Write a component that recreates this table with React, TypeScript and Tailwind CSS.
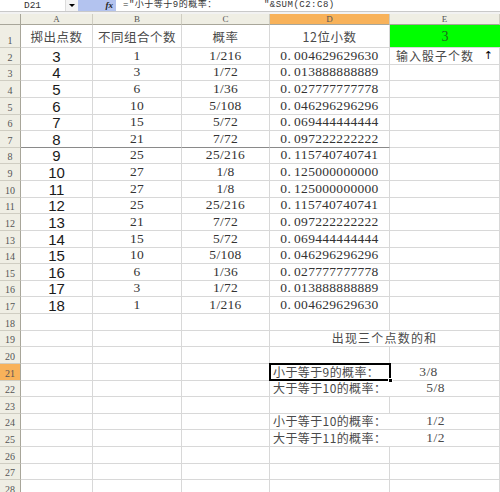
import React from "react";

const cjk = "font-['Noto_Sans_CJK_SC',sans-serif]";
const mono = "font-['Liberation_Mono','Noto_Sans_CJK_SC',monospace]";
const serif = "font-['Liberation_Serif','Noto_Sans_CJK_SC',serif]";
const cols = "grid grid-cols-[21px_72px_89px_88px_120px_110px]";
const grid = "border-r border-b border-[#d8d8d8]";

const counts = [1, 3, 6, 10, 15, 21, 25, 27, 27, 25, 21, 15, 10, 6, 3, 1];
const fracs = [
  "1/216", "1/72", "1/36", "5/108", "5/72", "7/72", "25/216", "1/8",
  "1/8", "25/216", "7/72", "5/72", "5/108", "1/36", "1/72", "1/216",
];
const decimals = [
  "004629629630", "013888888889", "027777777778", "046296296296",
  "069444444444", "097222222222", "115740740741", "125000000000",
  "125000000000", "115740740741", "097222222222", "069444444444",
  "046296296296", "027777777778", "013888888889", "004629629630",
];

// text in column D that runs over into E
const notes: Record<number, [string, string]> = {
  21: ["小于等于9的概率：", "3/8"],
  22: ["大于等于10的概率：", "5/8"],
  24: ["小于等于10的概率：", "1/2"],
  25: ["大于等于11的概率：", "1/2"],
};

function RowHead({ n, active }: { n: number; active?: boolean }) {
  return (
    <div
      className={`flex items-end justify-center border-r border-b border-r-[#a8a69a] border-b-[#cfcdc2] pb-[1px] font-['Liberation_Serif',serif] text-[10px] leading-[10px] text-[#555] ${
        active ? "bg-[#f8b25a]" : "bg-[#efeee4]"
      }`}
    >
      {n}
    </div>
  );
}

function FormulaBar() {
  return (
    <div className="flex h-[12px] border-b border-[#c9c9c9] bg-white">
      <div className={`flex w-[65px] items-center justify-center text-[9.5px] leading-none text-[#333] ${mono}`}>
        D21
      </div>
      <div className="flex w-[13px] items-center justify-center border-l border-[#dcdcdc] bg-[#f4f4f4]">
        <div className="h-0 w-0 border-x-[3px] border-t-[3px] border-x-transparent border-t-black" />
      </div>
      <div className="flex w-[38px] items-center justify-end bg-[#b3c3ef] pr-[3px]">
        <span className="font-['Liberation_Serif',serif] text-[9px] font-bold italic leading-none text-[#222]">
          fx
        </span>
      </div>
      <div className={`flex flex-1 items-center whitespace-pre pl-[7px] text-[9px] leading-none tracking-[0.5px] text-[#333] ${mono}`}>
        {'="小于等于9的概率：        "&SUM(C2:C8)'}
      </div>
    </div>
  );
}

function ColumnHeads() {
  const letters = ["A", "B", "C", "D", "E"];
  return (
    <div className={`${cols} h-[11px]`}>
      <div className="border-r border-b border-[#a8a69a] bg-[#efeee4]" />
      {letters.map((l) => (
        <div
          key={l}
          className={`flex items-center justify-center border-r border-b border-r-[#cfcdc2] border-b-[#a8a69a] font-['Liberation_Serif',serif] text-[9px] leading-none text-[#555] ${
            l === "D" ? "bg-[#f8b25a]" : "bg-[#efeee4]"
          }`}
        >
          {l}
        </div>
      ))}
    </div>
  );
}

function HeaderRow() {
  const head = `flex items-end justify-center pb-[3px] text-[12.5px] leading-[14px] tracking-[0.5px] text-[#4a4a4a] ${cjk} ${grid}`;
  return (
    <div className={`${cols} h-[23px]`}>
      <RowHead n={1} />
      <div className={head}>掷出点数</div>
      <div className={head}>不同组合个数</div>
      <div className={head}>概率</div>
      <div className={head}>12位小数</div>
      <div className={`flex items-end justify-center border-b border-[#d8d8d8] bg-[#00ff00] pb-[3px] text-[14px] leading-[14px] text-[#1d6a1d] ${serif}`}>
        3
      </div>
    </div>
  );
}

function DataRow({ i }: { i: number }) {
  const n = i + 2;
  const dark = n === 7 ? "border-b-[#8a8a8a]" : "";
  const num = `flex items-end justify-center pb-[1px] text-[13.5px] leading-[14px] text-[#333] ${serif} ${grid} ${dark}`;
  return (
    <div className={`${cols} h-[16.63px]`}>
      <RowHead n={n} />
      <div className={`flex items-end justify-center font-['Liberation_Sans',sans-serif] text-[15px] leading-[15px] text-[#1a1a1a] ${grid} ${dark}`}>
        {i + 3}
      </div>
      <div className={`${num} tracking-[0.3px]`}>{counts[i]}</div>
      <div className={`${num} tracking-[0.3px]`}>{fracs[i]}</div>
      <div className={`${num} tracking-[0.3px]`}>
        <span>0.</span>
        <span className="ml-[3px]">{decimals[i]}</span>
      </div>
      {n === 2 ? (
        <div className={`flex items-end justify-between pb-[1px] pl-[6px] pr-[5px] text-[12px] leading-[14px] tracking-[1px] text-[#4a4a4a] ${cjk} ${grid}`}>
          <span>输入骰子个数</span>
          <span className="font-['DejaVu_Sans',sans-serif] text-[11px] text-black">↑</span>
        </div>
      ) : (
        <div className={grid} />
      )}
    </div>
  );
}

function LowerRow({ n }: { n: number }) {
  const note = notes[n];
  return (
    <div className={`${cols} h-[16.63px]`}>
      <RowHead n={n} active={n === 21} />
      <div className={grid} />
      <div className={grid} />
      <div className={grid} />
      {n === 19 ? (
        <div className={`col-span-2 flex items-end justify-center pb-[1px] text-[12px] leading-[14px] tracking-[1.2px] text-[#4a4a4a] ${cjk} ${grid}`}>
          出现三个点数的和
        </div>
      ) : note ? (
        <>
          <div className={`relative flex items-end whitespace-nowrap border-b border-[#d8d8d8] pb-[1px] pl-[3px] text-[12px] leading-[14px] tracking-[0.4px] text-[#4a4a4a] ${cjk}`}>
            <span>{note[0]}</span>
            <span className={`ml-[40px] text-[13.5px] ${serif}`}>{note[1]}</span>
            {n === 21 && (
              <div className="absolute inset-[-1px] border-2 border-black">
                <div className="absolute bottom-[-4px] right-[-4px] h-[5px] w-[5px] border border-white bg-black" />
              </div>
            )}
          </div>
          <div className={grid} />
        </>
      ) : (
        <>
          <div className={grid} />
          <div className={grid} />
        </>
      )}
    </div>
  );
}

export default function App() {
  return (
    <div className="h-[492px] w-[500px] overflow-hidden bg-white">
      <FormulaBar />
      <div className="h-[2px] bg-[#f2f2f2]" />
      <ColumnHeads />
      <HeaderRow />
      {counts.map((_, i) => (
        <DataRow key={i} i={i} />
      ))}
      {Array.from({ length: 11 }, (_, k) => (
        <LowerRow key={k} n={18 + k} />
      ))}
    </div>
  );
}
